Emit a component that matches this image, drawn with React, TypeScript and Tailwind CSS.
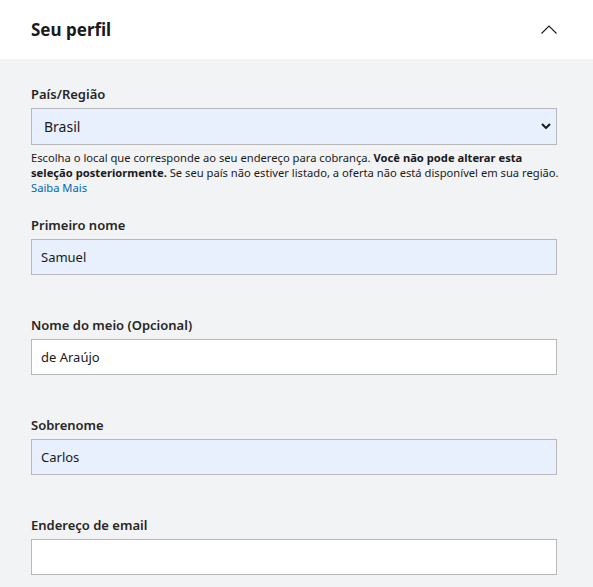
import { useState } from "react";

type FieldProps = {
    label: string;
    value: string;
    filled?: boolean;
};

function Field({ label, value, filled }: FieldProps) {
    const [text, setText] = useState(value);

    return (
        <div className="mb-[40px]">
            <label className="block h-[20px] text-[13px] font-semibold leading-[20px] text-[#262626]">
                {label}
            </label>
            <input
                value={text}
                onChange={(e) => setText(e.target.value)}
                className={`mt-[4px] block h-[36px] w-full border border-[#b8b8b8] px-[9px] text-[13px] text-[#1a1a1a] outline-none ${
                    filled ? "bg-[#e8f0fe]" : "bg-white"
                }`}
            />
        </div>
    );
}

export default function App() {
    const [open, setOpen] = useState(true);

    return (
        <div className="min-h-[587px] w-[593px] bg-[#f2f3f5] font-['Noto_Sans',sans-serif]">
            <div className="flex h-[59px] items-center justify-between bg-white pl-[31px] pr-[36px]">
                <h2 className="text-[17px] font-bold text-[#1a1a1a]">Seu perfil</h2>
                <button onClick={() => setOpen(!open)} className="flex h-[10px] w-[16px] items-center justify-center">
                    <svg width="16" height="9" viewBox="0 0 16 9" fill="none">
                        <path d="M0.5 8.5 L8 1 L15.5 8.5" stroke="#1a1a1a" strokeWidth="1.1" />
                    </svg>
                </button>
            </div>

            {open ? (
                <div className="pl-[31px] pr-[36px] pt-[25px]">
                    <label className="block h-[20px] text-[13px] font-semibold leading-[20px] text-[#262626]">
                        País/Região
                    </label>
                    <div className="relative mt-[4px]">
                        <select className="block h-[37px] w-full appearance-none border border-[#b8b8b8] bg-[#e8f0fe] pl-[12px] text-[14px] text-[#1a1a1a] outline-none">
                            <option>Brasil</option>
                        </select>
                        <svg
                            className="pointer-events-none absolute right-[6px] top-[15px]"
                            width="10"
                            height="6"
                            viewBox="0 0 10 6"
                            fill="none"
                        >
                            <path d="M1 1 L5 5 L9 1" stroke="#1a1a1a" strokeWidth="2" />
                        </svg>
                    </div>
                    <p className="mt-[5px] text-[11.2px] leading-[15px] text-[#1a1a1a]">
                        <span className="whitespace-nowrap">
                            Escolha o local que corresponde ao seu endereço para cobrança.{" "}
                            <b>Você não pode alterar esta</b>
                        </span>
                        <br />
                        <span className="whitespace-nowrap">
                            <b>seleção posteriormente.</b> Se seu país não estiver listado, a oferta não está disponível em sua região.
                        </span>
                        <br />
                        <a href="#" className="text-[#0067b8]">
                            Saiba Mais
                        </a>
                    </p>

                    <div className="mt-[20px]">
                        <Field label="Primeiro nome" value="Samuel" filled />
                        <Field label="Nome do meio (Opcional)" value="de Araújo" />
                        <Field label="Sobrenome" value="Carlos" filled />
                        <Field label="Endereço de email" value="" />
                    </div>
                </div>
            ) : null}
        </div>
    );
}
